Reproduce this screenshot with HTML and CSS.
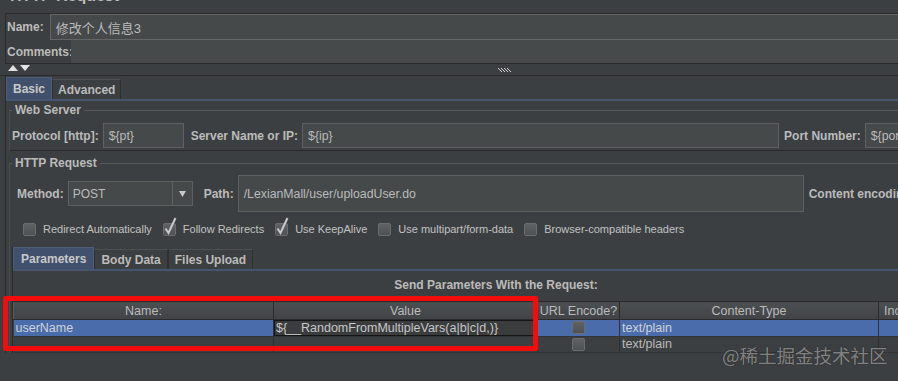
FILE: index.html
```html
<!DOCTYPE html>
<html lang="zh">
<head>
    <meta charset="UTF-8">
    <title>HTTP Request</title>
    <link rel="stylesheet" href="styles.css">
</head>
<body>
    <div class="page-title"><span>HTTP Request</span></div>

    <div class="props">
        <div class="prop-row name-row">
            <label>Name:</label>
            <div class="field name-field">修改个人信息3</div>
        </div>
        <div class="prop-row comments-row">
            <label>Comments:</label>
            <div class="comments-field"></div>
        </div>
    </div>

    <div class="splitter">
        <svg class="arrows" width="23" height="7" viewBox="0 0 23 7">
            <polygon points="0,6 5,0 10,6" fill="#e2e2e2"/>
            <polygon points="12,0 22,0 17,6" fill="#e2e2e2"/>
        </svg>
        <svg class="grip" width="14" height="5" viewBox="0 0 14 5">
            <g fill="#d8d8d8">
                <rect x="0" y="0" width="1" height="1"/><rect x="3" y="0" width="1" height="1"/><rect x="6" y="0" width="1" height="1"/><rect x="9" y="0" width="1" height="1"/>
                <rect x="1" y="1" width="1" height="1"/><rect x="4" y="1" width="1" height="1"/><rect x="7" y="1" width="1" height="1"/><rect x="10" y="1" width="1" height="1"/>
                <rect x="2" y="2" width="1" height="1"/><rect x="5" y="2" width="1" height="1"/><rect x="8" y="2" width="1" height="1"/><rect x="11" y="2" width="1" height="1"/>
                <rect x="3" y="3" width="1" height="1"/><rect x="6" y="3" width="1" height="1"/><rect x="9" y="3" width="1" height="1"/><rect x="12" y="3" width="1" height="1"/>
            </g>
        </svg>
    </div>

    <div class="tab-pane outer-pane">
        <div class="tabs">
            <div class="tab active">Basic</div>
            <div class="tab">Advanced</div>
        </div>
        <div class="tab-body">
            <fieldset class="group web-server">
                <legend>Web Server</legend>
                <div class="form-row">
                    <label>Protocol [http]:</label>
                    <div class="field proto-field">${pt}</div>
                    <label class="gap-label">Server Name or IP:</label>
                    <div class="field server-field">${ip}</div>
                    <label class="port-label">Port Number:</label>
                    <div class="field port-field">${port}</div>
                </div>
            </fieldset>

            <fieldset class="group http-request">
                <legend>HTTP Request</legend>
                <div class="form-row method-row">
                    <label>Method:</label>
                    <div class="combo">
                        <span class="combo-value">POST</span>
                        <span class="combo-arrow">
                            <svg width="7" height="6" viewBox="0 0 7 6"><polygon points="0,0 7,0 3.5,6" fill="#c8c8c8"/></svg>
                        </span>
                    </div>
                    <label class="path-label">Path:</label>
                    <div class="field path-field">/LexianMall/user/uploadUser.do</div>
                    <label class="enc-label">Content encoding:</label>
                </div>

                <div class="check-row">
                    <span class="check"><span class="box"></span>Redirect Automatically</span>
                    <span class="check"><span class="box checked"><svg width="13" height="13" viewBox="0 0 13 13"><path d="M2.5 5.5 L5.5 10 L12.5 -5" fill="none" stroke="#c9c9c9" stroke-width="2"/></svg></span>Follow Redirects</span>
                    <span class="check"><span class="box checked"><svg width="13" height="13" viewBox="0 0 13 13"><path d="M2.5 5.5 L5.5 10 L12.5 -5" fill="none" stroke="#c9c9c9" stroke-width="2"/></svg></span>Use KeepAlive</span>
                    <span class="check"><span class="box"></span>Use multipart/form-data</span>
                    <span class="check"><span class="box"></span>Browser-compatible headers</span>
                </div>

                <div class="tab-pane params-pane">
                    <div class="tabs">
                        <div class="tab active">Parameters</div>
                        <div class="tab">Body Data</div>
                        <div class="tab">Files Upload</div>
                    </div>
                    <div class="params-caption">Send Parameters With the Request:</div>
                    <table class="params">
                        <colgroup>
                            <col style="width: 260px">
                            <col style="width: 264px">
                            <col style="width: 82px">
                            <col style="width: 259px">
                            <col style="width: 100px">
                        </colgroup>
                        <thead>
                            <tr><th>Name:</th><th>Value</th><th>URL Encode?</th><th>Content-Type</th><th>Include Equals?</th></tr>
                        </thead>
                        <tbody>
                            <tr class="selected">
                                <td>userName</td>
                                <td class="editing"><div class="editor">${__RandomFromMultipleVars(a|b|c|d,)}</div></td>
                                <td class="center"><span class="box"></span></td>
                                <td>text/plain</td>
                                <td></td>
                            </tr>
                            <tr>
                                <td></td>
                                <td></td>
                                <td class="center"><span class="box"></span></td>
                                <td>text/plain</td>
                                <td></td>
                            </tr>
                        </tbody>
                    </table>
                </div>
            </fieldset>
        </div>
    </div>

    <div class="highlight"></div>
    <div class="watermark">@稀土掘金技术社区</div>
</body>
</html>
```

FILE: styles.css
```css
* { box-sizing: border-box; }
html {
    overflow: hidden;
    height: 100%;
}
body {
    margin: 0;
    width: 1000px;
    height: 100%;
    background: #3c3f41;
    color: #bbbbbb;
    font-family: "Liberation Sans", Arial, "Noto Sans CJK SC", sans-serif;
    font-size: 12px;
    position: relative;
}
label {
    font-weight: bold;
    white-space: nowrap;
}

/* title, cut off at the top */
.page-title {
    height: 13px;
    overflow: hidden;
    padding-left: 10px;
}
.page-title span {
    display: block;
    font-size: 16px;
    font-weight: bold;
    line-height: 16px;
    margin-top: -12px;
}

/* name / comments */
.props {
    margin-left: 5px;
    border: 1px solid #2b2b2b;
    border-right: 0;
}
.prop-row {
    display: flex;
    align-items: center;
    padding-left: 1px;
}
.name-row {
    height: 26px;
    gap: 6px;
}
.field {
    background: #45494a;
    border: 1px solid #5e6060;
    color: #bbbbbb;
    font-size: 12.3px;
    padding-left: 5px;
    display: flex;
    align-items: center;
    white-space: nowrap;
    overflow: hidden;
}
.name-field {
    flex: 1;
    height: 26px;
    font-size: 13px;
    border-color: #646666;
}
.comments-row {
    height: 23px;
}
.comments-field {
    flex: 1;
    height: 23px;
    background: #464a4b;
    margin-left: -2px;
}

/* splitter */
.splitter {
    height: 12px;
    border-bottom: 1px solid #2b2b2b;
    display: flex;
    align-items: center;
    padding-left: 8px;
    padding-bottom: 2px;
}
.grip {
    margin-left: 467px;
    margin-top: 3px;
}

/* tabbed panes */
.tab-pane {
    border-left: 1px solid #2b2b2b;
}
.outer-pane {
    margin-left: 5px;
}
.tabs {
    display: flex;
    align-items: flex-end;
    height: 25px;
    padding-top: 3px;
    border-bottom: 2px solid #45556f;
}
.tab {
    height: 20px;
    padding: 0 5px;
    display: flex;
    align-items: center;
    font-weight: bold;
    background: #3c3f41;
    border: 1px solid #2e3032;
    border-top-color: #4e5153;
    border-bottom: 0;
}
.tab.active {
    height: 22px;
    padding: 0 6px;
    background: #41516d;
    border-color: #4d5d7a;
    color: #c8c8c8;
}

/* titled groups */
.group {
    margin: 0;
    border: 0;
    border-top: 1px solid #57595b;
    border-left: 1px solid #4a4c4e;
    padding: 0 0 0 2px;
    min-width: 0;
}
.group legend {
    padding: 0 3px;
    font-weight: bold;
    line-height: 14px;
    color: #bbbbbb;
}
.web-server {
    margin: 2px 0 0 3px;
    padding-top: 5px;
    padding-bottom: 2px;
    border-bottom: 1px solid #2b2b2b;
}
.http-request {
    margin: 5px 0 0 3px;
    padding-top: 5px;
}
.form-row {
    display: flex;
    align-items: center;
    gap: 4px;
    height: 25px;
    margin-top: 1px;
}
.proto-field { width: 81px; height: 25px; }
.gap-label { margin-left: 3px; }
.server-field { width: 477px; height: 25px; }
.port-label { margin-left: 1px; }
.port-field { width: 80px; height: 25px; }

.method-row {
    height: 37px;
    margin-top: 0;
    padding-left: 5px;
}
.combo {
    width: 125px;
    height: 25px;
    border: 1px solid #5e6060;
    background: #45494a;
    display: flex;
    align-items: center;
}
.combo-value {
    flex: 1;
    padding-left: 4px;
}
.combo-arrow {
    width: 20px;
    height: 100%;
    border-left: 1px solid #5e6060;
    display: flex;
    align-items: center;
    justify-content: center;
}
.path-label { margin-left: 7px; }
.path-field { width: 566px; height: 37px; }
.enc-label { margin-left: 1px; }

/* checkboxes */
.check-row {
    display: flex;
    align-items: center;
    gap: 11px;
    height: 18px;
    margin-top: 8px;
    padding-left: 11px;
    font-size: 11px;
    color: #c2c2c2;
}
.check {
    display: flex;
    align-items: center;
    gap: 7px;
    white-space: nowrap;
}
.box {
    display: inline-block;
    width: 13px;
    height: 13px;
    border: 1px solid #6a6c6e;
    border-radius: 2px;
    background: linear-gradient(#5f6264, #4f5254);
}
.box svg {
    display: block;
    margin: -1px;
    overflow: visible;
}

/* parameters */
.params-pane {
    margin-top: 9px;
}
.params-pane .tabs {
    height: 24px;
    padding-top: 2px;
}
.params-pane .tab {
    padding: 0 6px;
}
.params-pane .tab.active {
    padding: 0 7px;
}
.params-caption {
    width: 966px;
    text-align: center;
    font-weight: bold;
    line-height: 14px;
    padding: 7px 0 9px;
}
.params {
    border-collapse: collapse;
    table-layout: fixed;
    width: 965px;
    font-size: 12.5px;
}
.params th {
    height: 18px;
    padding: 0;
    font-weight: normal;
    color: #bbbbbb;
    background: linear-gradient(#4c4f52, #414446);
    border: 1px solid #2b2b2b;
    border-left-color: #5a5d5f;
    white-space: nowrap;
    overflow: hidden;
}
.params td {
    height: 16px;
    padding: 0 0 0 2px;
    border-right: 1px solid #2e3032;
    border-bottom: 1px solid #333537;
    white-space: nowrap;
    overflow: hidden;
    line-height: 15px;
}
.params tr.selected td {
    background: #4b6cab;
    color: #cfd3d8;
}
.params td.editing {
    padding: 0;
}
.editor {
    height: 16px;
    background: #3a3c3e;
    border: 1px solid #151515;
    color: #c8c8c8;
    padding-left: 1px;
    line-height: 14px;
}
.params td.center {
    text-align: center;
    padding: 0;
}
.params td.center .box {
    vertical-align: middle;
    margin-top: -1px;
}

/* annotation overlays */
.highlight {
    position: absolute;
    left: 3px;
    top: 296px;
    width: 535px;
    height: 55px;
    border: 5px solid #f20c0c;
    border-radius: 2px;
}
.watermark {
    position: absolute;
    left: 722px;
    top: 345px;
    font-family: "Noto Sans CJK SC", sans-serif;
    font-size: 18.5px;
    line-height: 20px;
    color: rgba(200, 200, 200, 0.62);
    text-shadow: 0 0 1px rgba(0, 0, 0, 0.7);
}
```
